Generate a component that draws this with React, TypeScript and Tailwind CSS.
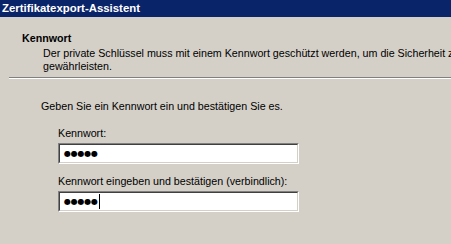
import React from 'react'

function PasswordBox({ count, caret }: { count: number; caret?: boolean }) {
  return (
    <div className="w-[241px] h-[21px] border border-t-[#808080] border-l-[#808080] border-b-white border-r-white">
      <div className="h-full border border-t-[#404040] border-l-[#404040] border-b-[#d4d0c8] border-r-[#d4d0c8] bg-white flex items-center pl-[4px]">
        <span className="font-['DejaVu_Sans',sans-serif] text-[8px] leading-none tracking-[-0.2px] text-black">
          {'●'.repeat(count)}
        </span>
        {caret && <div className="w-px h-[15px] bg-black ml-[1px]" />}
      </div>
    </div>
  )
}

export default function App() {
  return (
    <div className="w-[451px] h-[244px] overflow-hidden bg-[#d4d0c8] text-black font-['Liberation_Sans',Arial,sans-serif] text-[10.7px]">
      {/* title bar */}
      <div className="h-[17px] bg-[#0a246a] pl-[2px] text-white font-bold text-[11.4px] leading-[17px] whitespace-nowrap">
        Zertifikatexport-Assistent
      </div>

      {/* header */}
      <div className="pt-[15px] pl-[22px] leading-[13px]">
        <div className="font-bold">Kennwort</div>
        <div className="pl-[21px] pt-[2px] whitespace-nowrap">
          <div>Der private Schlüssel muss mit einem Kennwort geschützt werden, um die Sicherheit zu</div>
          <div>gewährleisten.</div>
        </div>
      </div>
      <div className="ml-[9px] mt-[4px] border-t border-t-[#808080] border-b border-b-white" />

      {/* body */}
      <div className="pl-[41px] pt-[20px] leading-[14px]">
        <div>Geben Sie ein Kennwort ein und bestätigen Sie es.</div>
        <div className="pl-[17px] pt-[13px]">
          <div className="pb-[3px]">Kennwort:</div>
          <PasswordBox count={5} />
          <div className="pt-[10px] pb-[3px]">Kennwort eingeben und bestätigen (verbindlich):</div>
          <PasswordBox count={5} caret />
        </div>
      </div>
    </div>
  )
}
